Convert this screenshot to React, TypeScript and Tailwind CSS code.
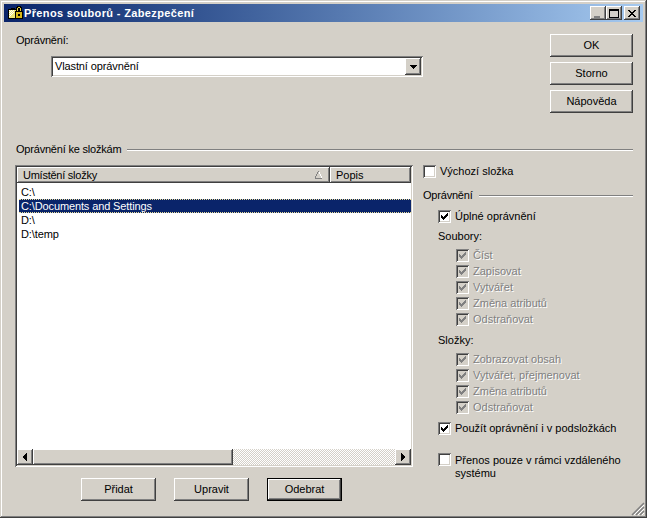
import React from 'react';

const raised = 'shadow-[inset_-1px_-1px_0_#404040,inset_1px_1px_0_#fff,inset_-2px_-2px_0_#808080]';
const sunken = 'shadow-[inset_1px_1px_0_#808080,inset_-1px_-1px_0_#fff,inset_2px_2px_0_#404040,inset_-2px_-2px_0_#d4d0c8]';

const Button = ({ label, w, isDefault }: { label: string; w: string; isDefault?: boolean }) => (
  <button
    className={`${w} h-[23px] flex items-center justify-center bg-[#d4d0c8] text-black ${
      isDefault
        ? 'border border-black shadow-[inset_-1px_-1px_0_#404040,inset_1px_1px_0_#fff,inset_-2px_-2px_0_#808080]'
        : raised
    }`}
  >
    {label}
  </button>
);

const Check = ({ checked, disabled, label, className }: { checked?: boolean; disabled?: boolean; label: string; className?: string }) => (
  <div className={`flex items-center h-[13px] ${className ?? ''}`}>
    <div className={`w-[13px] h-[13px] shrink-0 ${disabled ? 'bg-[#d4d0c8]' : 'bg-white'} ${sunken}`}>
      {checked && (
        <svg width="13" height="13" viewBox="0 0 13 13" shapeRendering="crispEdges">
          <path d="M3 5h1v3h-1zM4 6h1v3h-1zM5 7h1v3h-1zM6 6h1v3h-1zM7 5h1v3h-1zM8 4h1v3h-1zM9 3h1v3h-1z" fill={disabled ? '#808080' : '#000'} />
        </svg>
      )}
    </div>
    <span className={`ml-[4px] whitespace-nowrap ${disabled ? 'text-[#808080] [text-shadow:1px_1px_0_#fff]' : 'text-black'}`}>{label}</span>
  </div>
);

const Section = ({ label, lineClass }: { label: string; lineClass?: string }) => (
  <div className={`flex items-center h-[13px] ${lineClass ?? ''}`}>
    <span className="whitespace-nowrap tracking-[-0.2px]">{label}</span>
    <div className="flex-1 ml-[6px] h-[2px] border-t border-t-[#808080] border-b border-b-white" />
  </div>
);

const Row = ({ text, selected }: { text: string; selected?: boolean }) => (
  <div
    className={`h-[14px] flex items-center pl-[2px] tracking-[-0.12px] ${
      selected ? 'bg-[#0a246a] text-white border-y border-dotted border-[#e8dc98]' : 'text-black'
    }`}
  >
    {text}
  </div>
);

const ScrollArrow = ({ dir }: { dir: 'left' | 'right' }) => (
  <div className={`w-[16px] h-[16px] shrink-0 flex items-center justify-center bg-[#d4d0c8] ${raised}`}>
    <svg width="6" height="8" viewBox="0 0 6 8" shapeRendering="crispEdges">
      <path d={dir === 'left' ? 'M4 0h1v8h-1zM3 1h1v6h-1zM2 2h1v4h-1zM1 3h1v2h-1z' : 'M1 0h1v8h-1zM2 1h1v6h-1zM3 2h1v4h-1zM4 3h1v2h-1z'} fill="#000" />
    </svg>
  </div>
);

const TitleButton = ({ children, className }: { children: React.ReactNode; className?: string }) => (
  <div className={`w-[16px] h-[14px] flex items-center justify-center bg-[#d4d0c8] ${raised} ${className ?? ''}`}>{children}</div>
);

const App: React.FC = () => {
  return (
    <div className="relative w-[647px] h-[518px] bg-[#d4d0c8] p-[4px] overflow-hidden text-[11px] leading-[13px] text-black font-['Liberation_Sans',sans-serif] shadow-[inset_-1px_-1px_0_#404040,inset_1px_1px_0_#d4d0c8,inset_-2px_-2px_0_#808080,inset_2px_2px_0_#fff]">
      {/* Title bar */}
      <div className="h-[18px] flex items-center bg-gradient-to-r from-[#0a246a] to-[#a6caf0] pl-[3px] pr-[3px] text-white font-bold">
        <svg width="16" height="16" viewBox="0 0 16 16" shapeRendering="crispEdges" className="shrink-0">
          <path d="M1 4h3v-1h4v1h4v10h-11z" fill="#000" />
          <path d="M2 5h9v8h-9z" fill="#f0e878" />
          <path d="M2 5h1v1h-1zM4 5h1v1h-1zM6 5h1v1h-1zM3 6h1v1h-1zM5 6h1v1h-1zM2 7h1v1h-1zM4 7h1v1h-1zM6 7h1v1h-1zM3 8h1v1h-1zM5 8h1v1h-1zM2 9h1v1h-1zM4 9h1v1h-1zM3 10h1v1h-1zM2 11h1v1h-1z" fill="#fff" />
          <path d="M10 1h4v1h1v4h1v8h-8v-8h1v-4h1z" fill="#000" />
          <path d="M11 2h2v1h1v3h-1v-3h-2v3h-1v-3h1z" fill="#e8d040" />
          <path d="M9 7h6v6h-6z" fill="#d8b818" />
          <path d="M11 9h2v2h-2z" fill="#000" />
        </svg>
        <span className="ml-[1px] text-[11px] tracking-[0.36px]">Přenos souborů - Zabezpečení</span>
        <TitleButton className="ml-auto">
          <div className="w-[6px] h-[2px] bg-[#808080] mt-[7px] mr-[2px]" />
        </TitleButton>
        <TitleButton>
          <div className="w-[10px] h-[9px] border border-black border-t-2" />
        </TitleButton>
        <TitleButton className="ml-[2px]">
          <svg width="8" height="7" viewBox="0 0 8 7" shapeRendering="crispEdges">
            <path d="M0 0h2v1h-2zM6 0h2v1h-2zM1 1h2v1h-2zM5 1h2v1h-2zM2 2h4v1h-4zM3 3h2v1h-2zM2 4h4v1h-4zM1 5h2v1h-2zM5 5h2v1h-2zM0 6h2v1h-2zM6 6h2v1h-2z" fill="#000" />
          </svg>
        </TitleButton>
      </div>

      <div className="pl-[12px] pr-[10px]">
        {/* Top */}
        <div className="flex pt-[12px]">
          <div className="flex-1">
            <div className="h-[13px] mb-[9px] tracking-[-0.2px]">Oprávnění:</div>
            <div className={`ml-[35px] w-[372px] h-[21px] bg-white flex items-center pl-[4px] pr-[2px] ${sunken}`}>
              <span className="flex-1 tracking-[-0.12px]">Vlastní oprávnění</span>
              <div className={`w-[16px] h-[17px] flex items-center justify-center bg-[#d4d0c8] ${raised}`}>
                <svg width="7" height="4" viewBox="0 0 7 4" shapeRendering="crispEdges">
                  <path d="M0 0h7v1h-7zM1 1h5v1h-5zM2 2h3v1h-3zM3 3h1v1h-1z" fill="#000" />
                </svg>
              </div>
            </div>
          </div>
          <div className="w-[83px] flex flex-col gap-[5px]">
            <Button label="OK" w="w-[83px]" />
            <Button label="Storno" w="w-[83px]" />
            <Button label="Nápověda" w="w-[83px]" />
          </div>
        </div>

        <Section label="Oprávnění ke složkám" lineClass="mt-[30px]" />

        {/* Lower part */}
        <div className="flex mt-[9px]">
          <div className="w-[398px] shrink-0 -ml-[1px]">
            <div className={`h-[302px] bg-white p-[2px] flex flex-col ${sunken}`}>
              <div className="flex h-[16px] shrink-0 bg-[#d4d0c8]">
                <div className={`w-[313px] flex items-center pl-[6px] ${raised}`}>
                  <span className="flex-1 tracking-[-0.25px]">Umístění složky</span>
                  <svg width="9" height="8" viewBox="0 0 9 8" className="mr-[7px]" shapeRendering="crispEdges">
                    <path d="M4 0h1v1h-1zM3 1h1v2h-1zM2 3h1v2h-1zM1 5h1v2h-1zM1 7h7v1h-7z" fill="#808080" />
                    <path d="M5 1h1v2h-1zM6 3h1v2h-1zM7 5h1v2h-1z" fill="#fff" />
                  </svg>
                </div>
                <div className={`flex-1 flex items-center pl-[6px] ${raised}`}>Popis</div>
              </div>
              <div className="flex-1 pt-[2px] pl-[2px]">
                <Row text="C:\" />
                <Row text="C:\Documents and Settings" selected />
                <Row text="D:\" />
                <Row text="D:\temp" />
              </div>
              <div className="flex h-[16px] shrink-0">
                <ScrollArrow dir="left" />
                <div className={`w-[200px] h-[16px] bg-[#d4d0c8] ${raised}`} />
                <div className="flex-1 bg-[repeating-conic-gradient(#d4d0c8_0_25%,#fff_0_50%)] bg-[length:2px_2px]" />
                <ScrollArrow dir="right" />
              </div>
            </div>
            <div className="flex gap-[18px] pl-[66px] mt-[11px]">
              <Button label="Přidat" w="w-[75px]" />
              <Button label="Upravit" w="w-[75px]" />
              <Button label="Odebrat" w="w-[75px]" isDefault />
            </div>
          </div>

          <div className="w-[210px] ml-[10px] shrink-0">
            <Check label="Výchozí složka" />
            <Section label="Oprávnění" lineClass="mt-[11px]" />
            <div className="pl-[15px]">
              <Check checked label="Úplné oprávnění" className="mt-[8px]" />
              <div className="mt-[7px] h-[13px]">Soubory:</div>
              <div className="pl-[18px] mt-[6px] flex flex-col gap-[3px]">
                <Check checked disabled label="Číst" />
                <Check checked disabled label="Zapisovat" />
                <Check checked disabled label="Vytvářet" />
                <Check checked disabled label="Změna atributů" />
                <Check checked disabled label="Odstraňovat" />
              </div>
              <div className="mt-[8px] h-[13px]">Složky:</div>
              <div className="pl-[18px] mt-[6px] flex flex-col gap-[3px]">
                <Check checked disabled label="Zobrazovat obsah" />
                <Check checked disabled label="Vytvářet, přejmenovat" />
                <Check checked disabled label="Změna atributů" />
                <Check checked disabled label="Odstraňovat" />
              </div>
              <Check checked label="Použít oprávnění i v podsložkách" className="mt-[8px]" />
              <div className="flex mt-[18px]">
                <div className={`w-[13px] h-[13px] shrink-0 bg-white ${sunken}`} />
                <span className="ml-[4px] mt-[1px] w-[180px]">Přenos pouze v rámci vzdáleného systému</span>
              </div>
            </div>
          </div>
        </div>
      </div>

      {/* Size grip */}
      <svg width="14" height="14" viewBox="0 0 14 14" className="absolute right-[2px] bottom-[2px]">
        <path d="M13 1L1 13M13 5L5 13M13 9L9 13" stroke="#808080" strokeWidth="1.5" fill="none" />
        <path d="M13 3L3 13M13 7L7 13M13 11L11 13" stroke="#fff" strokeWidth="1" fill="none" />
      </svg>
    </div>
  );
};

export default App;
